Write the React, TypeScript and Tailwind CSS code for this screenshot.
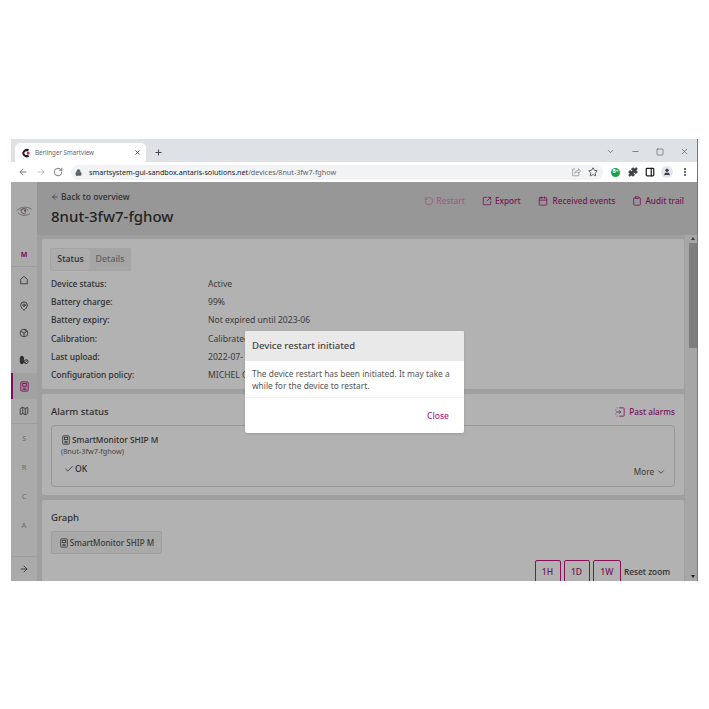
import {
  ArrowLeft,
  ArrowRight,
  Calendar,
  Check,
  ChevronDown,
  Clipboard,
  Lock,
  Map,
  MapPin,
  Minus,
  MoreVertical,
  PanelRight,
  Plus,
  Puzzle,
  RotateCcw,
  RotateCw,
  Square,
  Star,
  SquareArrowOutUpRight,
  User,
  X,
} from "lucide-react";

const rows = [
  ["Device status:", "Active"],
  ["Battery charge:", "99%"],
  ["Battery expiry:", "Not expired until 2023-06"],
  ["Calibration:", "Calibrated"],
  ["Last upload:", "2022-07-"],
  ["Configuration policy:", "MICHEL C"],
];

function DeviceIcon({ className }: { className?: string }) {
  return (
    <svg viewBox="0 0 12 12" fill="none" stroke="currentColor" strokeWidth="1" className={className}>
      <rect x="2" y="1" width="8" height="10" rx="1" />
      <rect x="4" y="2.8" width="4" height="2.8" />
      <path d="M4 7.6h4M4 9.2h4" />
    </svg>
  );
}

function EyeLogo() {
  return (
    <svg viewBox="0 0 20 14" className="h-[12px] w-[18px]" fill="none" stroke="#7d7d7d" strokeWidth="0.8">
      <path d="M1 7c4-5 13-6 18-2" />
      <path d="M3 9c4 4 10 4 14 1" />
      <path d="M5 6c3-2 8-2 10 0" />
      <path d="M12.2 5.2a3 3 0 1 0 .4 3.4" strokeWidth="1.1" />
      <circle cx="11.2" cy="6.8" r="1.1" fill="#b3127f" stroke="none" />
    </svg>
  );
}

function BrowserChrome() {
  return (
    <div className="shrink-0">
      <div className="relative flex h-[23px] items-end bg-[#dee1e6] pl-[4px]">
        <div className="flex h-[19px] w-[131px] items-center rounded-t-[5px] bg-white pl-[6px] pr-[5px]">
          <svg viewBox="0 0 12 12" className="h-[10px] w-[10px] shrink-0">
            <path d="M9.8 2.2A5 5 0 1 0 10 10L7.8 7.8A2.2 2.2 0 1 1 7.6 4.3Z" fill="#1f1f1f" />
            <circle cx="8.6" cy="6" r="1.8" fill="#d81b60" />
          </svg>
          <span className="ml-[4px] flex-1 text-[6.2px] text-[#5f6368]">Berlinger Smartview</span>
          <X className="h-[7px] w-[7px] text-[#3c4043]" strokeWidth={3} />
        </div>
        <Plus className="mb-[5px] ml-[8px] h-[9px] w-[9px] text-[#3c4043]" strokeWidth={2.5} />
        <div className="mb-[6px] ml-auto flex items-center gap-[16px] pr-[8px] text-[#5f6368]">
          <ChevronDown className="h-[9px] w-[9px]" />
          <Minus className="h-[9px] w-[9px]" />
          <Square className="h-[8px] w-[8px]" />
          <X className="h-[9px] w-[9px]" />
        </div>
      </div>
      <div className="flex h-[20px] items-center bg-white pl-[7px] text-[#5f6368]">
        <ArrowLeft className="h-[10px] w-[10px]" />
        <ArrowRight className="ml-[8px] h-[10px] w-[10px] text-[#b4b6b9]" />
        <RotateCw className="ml-[7px] h-[10px] w-[10px]" />
        <div className="ml-[8px] flex h-[15px] w-[532px] items-center rounded-full bg-[#f1f3f4] pl-[4px] pr-[5px]">
          <Lock className="h-[7px] w-[7px] fill-[#5f6368]" />
          <span className="ml-[7px] flex-1 text-[7.2px] text-[#202124]">
            smartsystem-gui-sandbox.antaris-solutions.net
            <span className="text-[#5f6368]">/devices/8nut-3fw7-fghow</span>
          </span>
          <svg viewBox="0 0 12 12" className="h-[10px] w-[10px] text-[#8a8d91]" fill="none" stroke="currentColor" strokeWidth="0.9">
            <path d="M5 2.5H2v8h7.5V7.5" />
            <path d="M4.5 7.5C5 5 7 4 9 4V2l2.5 3L9 7.5V6C7 6 5.5 6.3 4.5 7.5Z" />
          </svg>
          <Star className="ml-[7px] h-[10px] w-[10px] text-[#3c4043]" />
        </div>
        <div className="ml-[8px] flex h-[9px] w-[9px] items-center justify-center rounded-full bg-[#16a34a] text-[5px] font-bold text-white">
          B+
        </div>
        <Puzzle className="ml-[8px] h-[10px] w-[10px] fill-[#3c4043] text-[#3c4043]" />
        <PanelRight className="ml-[7px] h-[10px] w-[10px] text-[#202124]" strokeWidth={3} />
        <div className="ml-[6px] flex h-[12px] w-[12px] items-center justify-center rounded-full bg-[#e2e6f0]">
          <User className="h-[8px] w-[8px] fill-[#3c4043] text-[#3c4043]" />
        </div>
        <MoreVertical className="ml-[7px] h-[10px] w-[10px] text-[#3c4043]" strokeWidth={3} />
      </div>
    </div>
  );
}

function Sidebar() {
  const icon = "h-[10px] w-[10px] text-[#444]";
  return (
    <aside className="flex w-[26px] shrink-0 flex-col items-stretch bg-[#f4f4f4] text-[7.5px] text-[#999]">
      <div className="flex h-[53px] items-center justify-center pt-[4px]">
        <EyeLogo />
      </div>
      <div className="flex h-[32px] items-center justify-center border-b border-[#e2e2e2] pt-[9px] text-[7px] font-bold text-[#b3127f]">
        M
      </div>
      <div className="flex h-[26px] items-center justify-center">
        <svg viewBox="0 0 12 12" className={icon} fill="none" stroke="currentColor" strokeWidth="1">
          <path d="M2 10.5V5.2L6 1.6l4 3.6v5.3z" strokeLinejoin="round" />
        </svg>
      </div>
      <div className="flex h-[26px] items-center justify-center"><MapPin className={icon} /></div>
      <div className="flex h-[27px] items-center justify-center">
        <svg viewBox="0 0 12 12" className={icon} fill="none" stroke="currentColor" strokeWidth="1">
          <circle cx="6" cy="6" r="4.6" />
          <path d="M2.4 4 6 6l3.6-2M6 6v4.5M6 1.5 9 4" />
        </svg>
      </div>
      <div className="flex h-[27px] items-center justify-center">
        <svg viewBox="0 0 12 12" className={icon} fill="none" stroke="currentColor" strokeWidth="1.1">
          <rect x="1.5" y="1.5" width="4" height="9" rx="2" fill="currentColor" />
          <circle cx="8.6" cy="8" r="2.3" />
          <path d="m7 9.5 3.2-3.2" />
        </svg>
      </div>
      <div className="flex h-[26px] items-center justify-center border-l-2 border-[#b3127f] bg-[#e8e8e8] pr-[2px]">
        <DeviceIcon className="h-[11px] w-[11px] text-[#b3127f]" />
      </div>
      <div className="flex h-[25px] items-center justify-center border-b border-[#e2e2e2]"><Map className={icon} /></div>
      <div className="flex h-[29px] items-center justify-center">S</div>
      <div className="flex h-[29px] items-center justify-center">R</div>
      <div className="flex h-[29px] items-center justify-center">C</div>
      <div className="flex h-[29px] items-center justify-center">A</div>
      <div className="mt-auto flex h-[25px] items-center justify-center border-t border-[#e2e2e2]">
        <ArrowRight className={icon} />
      </div>
    </aside>
  );
}

function HeaderAction({ children, label, className }: { children: React.ReactNode; label: string; className?: string }) {
  return (
    <span className={`flex items-center gap-[3px] text-[8.2px] font-medium ${className ?? "text-[#a8247c]"}`}>
      {children}
      {label}
    </span>
  );
}

function Card({ children, className }: { children: React.ReactNode; className?: string }) {
  return <section className={`rounded-[2px] bg-white px-[9px] ${className ?? ""}`}>{children}</section>;
}

export default function App() {
  return (
    <div className="h-[709px] w-[709px] bg-white pl-[11px] pt-[139px] font-['Noto_Sans',sans-serif]">
      <div className="relative flex h-[442px] w-[687px] flex-col overflow-hidden border-r border-[#777]">
        <BrowserChrome />
        <div className="relative flex min-h-0 flex-1 bg-[#e4e4e4]">
          <Sidebar />
          <div className="flex min-w-0 flex-1 flex-col">
            <header className="flex h-[53px] shrink-0 justify-between bg-[#d8d8d8] pl-[14px] pr-[13px]">
              <div className="pt-[9px]">
                <div className="flex items-center gap-[2px] text-[8.5px] font-medium text-[#444]">
                  <ArrowLeft className="h-[8px] w-[8px]" />
                  Back to overview
                </div>
                <h1 className="mt-[2px] text-[15px] font-medium leading-[20px] text-[#333]">8nut-3fw7-fghow</h1>
              </div>
              <div className="flex h-[38px] items-center gap-[17px]">
                <HeaderAction label="Restart" className="text-[#d98abb]">
                  <RotateCcw className="h-[10px] w-[10px]" />
                </HeaderAction>
                <HeaderAction label="Export">
                  <SquareArrowOutUpRight className="h-[10px] w-[10px]" />
                </HeaderAction>
                <HeaderAction label="Received events">
                  <Calendar className="mr-[2px] h-[10px] w-[10px]" />
                </HeaderAction>
                <HeaderAction label="Audit trail">
                  <Clipboard className="h-[10px] w-[10px]" />
                </HeaderAction>
              </div>
            </header>
            <div className="flex min-h-0 flex-1">
              <div className="flex min-w-0 flex-1 flex-col gap-[5px] overflow-hidden pl-[5px] pr-[1px] pt-[4px]">
                <Card className="h-[150px] shrink-0 pt-[9px]">
                  <div className="-ml-[1px] flex h-[23px] w-[81px] rounded-[2px] bg-[#ececec] p-[1px] text-[8.8px] font-medium">
                    <span className="flex w-[39px] items-center justify-center rounded-[2px] bg-[#f6f6f6] text-[#444]">Status</span>
                    <span className="flex flex-1 items-center justify-center text-[#8a8a8a]">Details</span>
                  </div>
                  <dl className="mt-[4px] text-[8.4px] text-[#444]">
                    {rows.map(([label, value]) => (
                      <div key={label} className="flex h-[18.3px] items-center">
                        <dt className="w-[157px] font-medium">{label}</dt>
                        <dd className="text-[8.6px] text-[#555]">{value}</dd>
                      </div>
                    ))}
                  </dl>
                </Card>
                <Card className="h-[101px] shrink-0">
                  <div className="flex h-[31px] items-center justify-between pt-[5px] text-[9.5px] font-medium text-[#444]">
                    Alarm status
                    <span className="flex items-center gap-[4px] text-[8.2px] text-[#a8247c]">
                      <svg viewBox="0 0 12 12" className="h-[10px] w-[10px]" fill="none" stroke="currentColor" strokeWidth="1">
                        <path d="M5 1h5a1 1 0 0 1 1 1v8a1 1 0 0 1-1 1H5" />
                        <path d="M1 6h6M5 4l2 2-2 2" />
                        <path d="M2 1h1M1 3v1M1 8v1M2 11h1" />
                      </svg>
                      Past alarms
                    </span>
                  </div>
                  <div className="relative h-[62px] rounded-[4px] border border-[#d8d8d8] px-[9px] pt-[8px]">
                    <div className="flex items-center gap-[1px] text-[8.3px] font-medium leading-[12px] text-[#444]">
                      <DeviceIcon className="h-[10px] w-[10px]" />
                      SmartMonitor SHIP M
                    </div>
                    <div className="text-[7.3px] leading-[11px] text-[#666]">(8nut-3fw7-fghow)</div>
                    <div className="ml-[3px] mt-[6px] flex items-center gap-[1px] text-[8.6px] font-medium text-[#444]">
                      <Check className="h-[10px] w-[10px]" />
                      OK
                    </div>
                    <div className="absolute bottom-[8px] right-[8px] flex items-center gap-[2px] text-[8.2px] text-[#555]">
                      More
                      <ChevronDown className="h-[10px] w-[10px]" />
                    </div>
                  </div>
                </Card>
                <Card className="flex-1 pt-[11px]">
                  <div className="text-[9.5px] font-medium text-[#444]">Graph</div>
                  <div className="mt-[6px] flex h-[23px] w-[111px] items-center justify-center gap-[1px] rounded-[2px] border border-[#e2e2e2] bg-[#f2f2f2] text-[8.1px] font-medium text-[#555]">
                    <DeviceIcon className="h-[10px] w-[10px]" />
                    SmartMonitor SHIP M
                  </div>
                  <div className="mr-[1px] mt-[6px] flex items-start justify-end gap-[3px] text-[8.6px] font-medium">
                    <span className="flex h-[24px] w-[26px] items-center justify-center rounded-[2px] border-[1.5px] border-[#c2187f] text-[#a8247c]">1H</span>
                    <span className="flex h-[24px] w-[26px] items-center justify-center rounded-[2px] border-[1.5px] border-[#c2187f] text-[#a8247c]">1D</span>
                    <span className="flex h-[24px] w-[28.5px] items-center justify-center rounded-[2px] border-[1.5px] border-[#c2187f] text-[#a8247c]">1W</span>
                    <span className="flex h-[24px] w-[50px] items-center whitespace-nowrap text-[8.3px] text-[#444]">Reset zoom</span>
                  </div>
                </Card>
              </div>
              <div className="relative flex w-[12px] shrink-0 flex-col bg-[#eeeeee] pl-[4px]">
                <div className="mt-[8px] h-[105px] w-[8px] bg-[#b5b5b5]" />
                <div className="absolute bottom-[3px] right-[2px] h-0 w-0 border-x-[2px] border-t-[3px] border-x-transparent border-t-[#333]" />
                <div className="absolute right-[2px] top-[2px] h-0 w-0 border-x-[2px] border-b-[3px] border-x-transparent border-b-[#555]" />
              </div>
            </div>
          </div>
          {/* затемнення під модалкою */}
          <div className="absolute inset-0 bg-black/30" />
          <div className="absolute left-[234px] top-[149px] w-[219px] overflow-hidden rounded-[2px] bg-white shadow-sm">
            <div className="flex h-[30px] items-center bg-[#e9e9e9] px-[7px] text-[9.5px] font-medium text-[#444]">
              Device restart initiated
            </div>
            <p className="h-[37px] border-b border-[#f2f2f2] px-[7px] pt-[7px] text-[8.4px] leading-[12px] text-[#555]">
              The device restart has been initiated. It may take a while for the device to restart.
            </p>
            <div className="flex h-[35px] items-center justify-end px-[15px] pt-[1px] text-[8.5px] font-medium text-[#b0247c]">Close</div>
          </div>
        </div>
      </div>
    </div>
  );
}
